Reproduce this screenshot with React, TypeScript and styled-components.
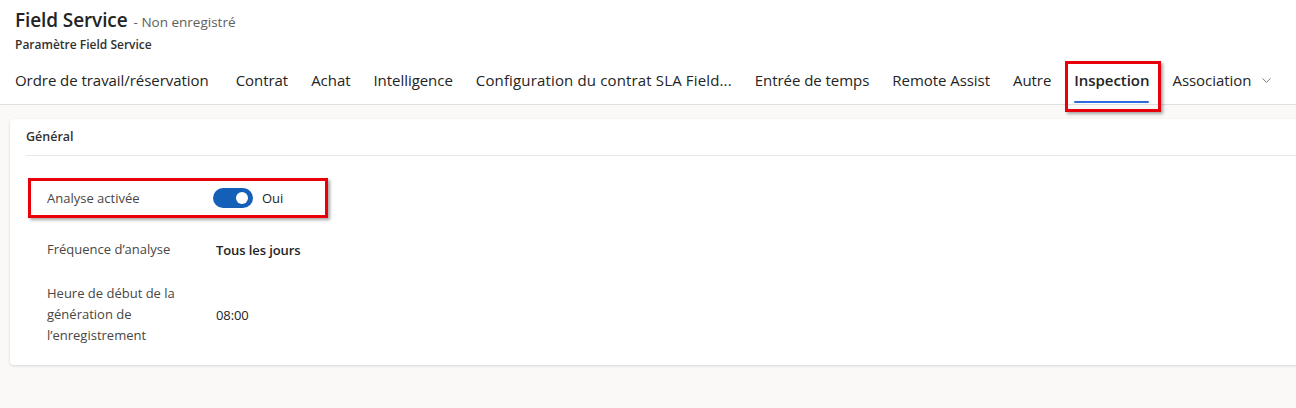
import styled, { createGlobalStyle } from "styled-components";
import { ChevronDown } from "lucide-react";

const GlobalStyle = createGlobalStyle`
  html, body {
    margin: 0;
    padding: 0;
    background: #faf9f8;
    font-family: "Open Sans", "Noto Sans", sans-serif;
    color: #242424;
  }
`

const Page = styled.div`
  width: 1296px;
  height: 408px;
  overflow: hidden;
  background: #faf9f8;
`

const Header = styled.header`
  background: #fff;
  border-bottom: 1px solid #e1dfdd;
  padding-left: 15px;
`

const TitleRow = styled.div`
  display: flex;
  align-items: baseline;
  gap: 6px;
  padding-top: 7px;
  height: 27px;
`

const Title = styled.h1`
  margin: 0;
  font-size: 19px;
  font-weight: 600;
  letter-spacing: -0.1px;
`

const SaveState = styled.span`
  font-size: 13.5px;
  color: #605e5c;
`

const Subtitle = styled.div`
  font-size: 12px;
  font-weight: 600;
  color: #323130;
  height: 22px;
  line-height: 22px;
`

const Tabs = styled.nav`
  display: flex;
  align-items: stretch;
  height: 48px;
  margin-left: -11.5px;
`

const Tab = styled.div<{ $active?: boolean; $wide?: boolean; $first?: boolean }>`
  position: relative;
  display: flex;
  align-items: center;
  gap: 8px;
  padding: 0 11.5px;
  margin-right: ${(p) => (p.$first ? 4 : 0)}px;
  font-size: 15px;
  letter-spacing: ${(p) => (p.$wide ? 0.15 : -0.05)}px;
  font-weight: ${(p) => (p.$active ? 600 : 400)};
  white-space: nowrap;
  color: #242424;

  ${(p) =>
    p.$active &&
    `
    &::before {
      content: "";
      position: absolute;
      left: 11.5px;
      right: 11.5px;
      bottom: 1px;
      height: 2px;
      border-radius: 1px;
      background: #2b6be0;
    }
  `}
`

const Callout = styled.span<{ $top: number; $right: number; $bottom: number; $left: number }>`
  position: absolute;
  top: ${(p) => p.$top}px;
  right: ${(p) => p.$right}px;
  bottom: ${(p) => p.$bottom}px;
  left: ${(p) => p.$left}px;
  border: 3px solid #e8000b;
  box-shadow: 2px 2px 3px rgba(0, 0, 0, 0.35);
  pointer-events: none;
  z-index: 2;
`

const Body = styled.main`
  padding: 14px 0 0 10px;
`

const Card = styled.section`
  background: #fff;
  border-radius: 4px 0 0 4px;
  box-shadow: 0 1px 3px rgba(0, 0, 0, 0.14);
  margin-right: -10px;
  padding: 0 0 19px 16px;
`

const SectionTitle = styled.h2`
  margin: 0;
  height: 36px;
  line-height: 36px;
  font-size: 12.5px;
  font-weight: 600;
  color: #323130;
  border-bottom: 1px solid #e8e8e8;
`

const Fields = styled.div`
  display: flex;
  flex-direction: column;
  gap: 17px;
  padding: 25px 0 0 5px;
`

const Field = styled.div<{ $width?: number }>`
  position: relative;
  display: grid;
  grid-template-columns: 166px 1fr;
  align-items: center;
  min-height: 34px;
  padding-left: 16px;
  width: ${(p) => (p.$width ? `${p.$width}px` : "auto")};
  box-sizing: border-box;
`

const Label = styled.div`
  font-size: 13px;
  line-height: 21px;
  color: #484644;
`

const Value = styled.div<{ $bold?: boolean; $text?: boolean }>`
  display: flex;
  align-items: center;
  gap: 9px;
  padding-left: ${(p) => (p.$text ? 3 : 0)}px;
  padding-top: ${(p) => (p.$bold ? 2 : 0)}px;
  font-size: 13px;
  font-weight: ${(p) => (p.$bold ? 600 : 400)};
  color: #242424;
  letter-spacing: -0.1px;
`

const Switch = styled.span<{ $on: boolean }>`
  position: relative;
  display: inline-block;
  width: 40px;
  height: 20px;
  border-radius: 10px;
  background: ${(p) => (p.$on ? "#1460b8" : "#fff")};

  &::after {
    content: "";
    position: absolute;
    top: 4px;
    ${(p) => (p.$on ? "right: 5px;" : "left: 5px;")}
    width: 12px;
    height: 12px;
    border-radius: 50%;
    background: #fff;
  }
`

const tabs = [
  "Contrat",
  "Achat",
  "Intelligence",
  "Configuration du contrat SLA Field...",
  "Entrée de temps",
  "Remote Assist",
  "Autre",
]

export default function App() {
  return (
    <Page>
      <GlobalStyle />
      <Header>
        <TitleRow>
          <Title>Field Service</Title>
          <SaveState>- Non enregistré</SaveState>
        </TitleRow>
        <Subtitle>Paramètre Field Service</Subtitle>
        <Tabs>
          <Tab $first>Ordre de travail/réservation</Tab>
          {tabs.map((t) => (
            <Tab key={t} $wide={t.startsWith("Configuration")}>
              {t}
            </Tab>
          ))}
          <Tab $active>
            Inspection
            <Callout $top={5} $right={0} $bottom={-8} $left={2} />
          </Tab>
          <Tab>
            Association
            <ChevronDown size={15} strokeWidth={1.3} color="#605e5c" />
          </Tab>
        </Tabs>
      </Header>
      <Body>
        <Card>
          <SectionTitle>Général</SectionTitle>
          <Fields>
            <Field $width={294}>
              <Label>Analyse activée</Label>
              <Value>
                <Switch $on />
                Oui
              </Value>
              <Callout $top={-3} $right={-3} $bottom={-3} $left={-3} />
            </Field>
            <Field>
              <Label>Fréquence d’analyse</Label>
              <Value $bold $text>Tous les jours</Value>
            </Field>
            <Field>
              <Label>
                Heure de début de la
                <br />
                génération de
                <br />
                l’enregistrement
              </Label>
              <Value $text>08:00</Value>
            </Field>
          </Fields>
        </Card>
      </Body>
    </Page>
  )
}
